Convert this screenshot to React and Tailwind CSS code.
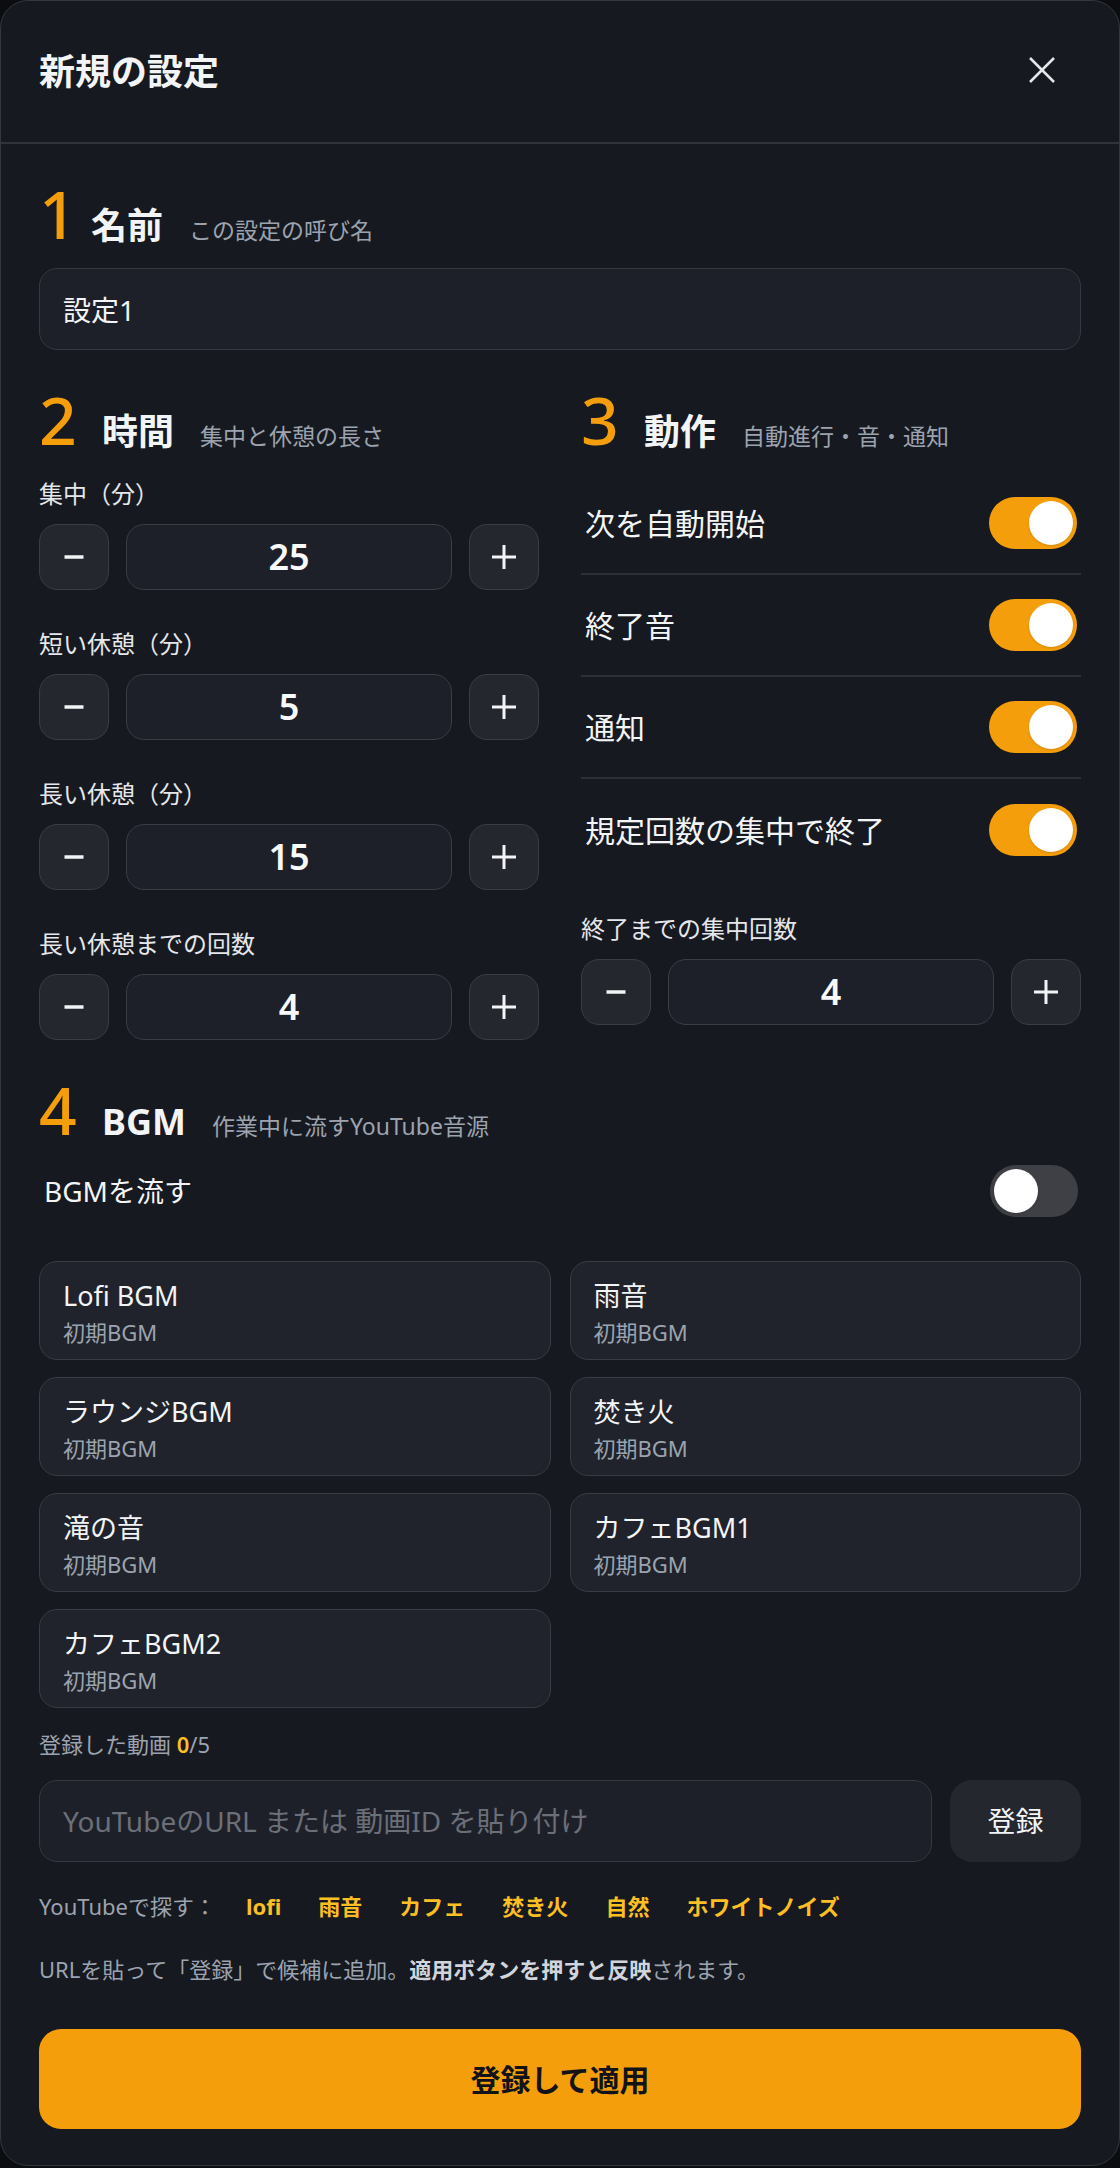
import React, { useState } from 'react';

const BGMS = [
  { name: 'Lofi BGM' },
  { name: '雨音' },
  { name: 'ラウンジBGM' },
  { name: '焚き火' },
  { name: '滝の音' },
  { name: 'カフェBGM1' },
  { name: 'カフェBGM2' },
];

const SEARCH_WORDS = ['lofi', '雨音', 'カフェ', '焚き火', '自然', 'ホワイトノイズ'];

function SectionHead({ num, title, sub }) {
  // "1" is narrower than the other digits in the original font
  const numWidth = num === '1' ? 'w-[52px]' : 'w-[63px]';
  return (
    <div className="flex items-baseline">
      <span className={'text-[66px] leading-none font-medium text-[#f59e0b] shrink-0 ' + numWidth}>{num}</span>
      <span className="text-[36px] leading-none font-bold text-[#f3f4f6]">{title}</span>
      <span className="text-[23px] leading-none text-[#9ca3af] ml-[26px]">{sub}</span>
    </div>
  );
}

function Toggle({ on, onChange }) {
  return (
    <button
      onClick={() => onChange(!on)}
      className={
        'w-[88px] h-[52px] rounded-full p-[4px] flex items-center shrink-0 ' +
        (on ? 'bg-[#f59e0b] justify-end' : 'bg-[#3f4046] justify-start')
      }
    >
      <span className="block w-[44px] h-[44px] rounded-full bg-white shadow" />
    </button>
  );
}

function Stepper({ label, value, onChange }) {
  return (
    <div>
      <div className="text-[24px] leading-[32px] text-[#e5e7eb]">{label}</div>
      <div className="mt-[14px] flex gap-[17px]">
        <button
          onClick={() => onChange(Math.max(1, value - 1))}
          className="w-[70px] h-[66px] shrink-0 rounded-[18px] border border-[#3a3d44] bg-[#25272e] flex items-center justify-center"
        >
          <svg width="24" height="24" viewBox="0 0 24 24">
            <line x1="2.5" y1="12" x2="21.5" y2="12" stroke="#f3f4f6" strokeWidth="3.5" />
          </svg>
        </button>
        <div className="flex-1 h-[66px] rounded-[18px] border border-[#3a3d44] bg-[#1e2029] flex items-center justify-center text-[36px] font-semibold text-[#f9fafb]">
          {value}
        </div>
        <button
          onClick={() => onChange(value + 1)}
          className="w-[70px] h-[66px] shrink-0 rounded-[18px] border border-[#3a3d44] bg-[#25272e] flex items-center justify-center"
        >
          <svg width="24" height="24" viewBox="0 0 24 24">
            <line x1="0" y1="12" x2="24" y2="12" stroke="#f3f4f6" strokeWidth="3" />
            <line x1="12" y1="0" x2="12" y2="24" stroke="#f3f4f6" strokeWidth="3" />
          </svg>
        </button>
      </div>
    </div>
  );
}

export default function App() {
  const [name, setName] = useState('設定1');
  const [focus, setFocus] = useState(25);
  const [shortBreak, setShortBreak] = useState(5);
  const [longBreak, setLongBreak] = useState(15);
  const [rounds, setRounds] = useState(4);
  const [endCount, setEndCount] = useState(4);
  const [autoStart, setAutoStart] = useState(true);
  const [sound, setSound] = useState(true);
  const [notify, setNotify] = useState(true);
  const [limit, setLimit] = useState(true);
  const [bgm, setBgm] = useState(false);
  const [url, setUrl] = useState('');

  const actions = [
    { label: '次を自動開始', on: autoStart, set: setAutoStart },
    { label: '終了音', on: sound, set: setSound },
    { label: '通知', on: notify, set: setNotify },
    { label: '規定回数の集中で終了', on: limit, set: setLimit },
  ];

  return (
    <div className="min-h-screen bg-[#0c0d10] font-['Noto_Sans','Noto_Sans_CJK_JP',sans-serif]">
      <div className="rounded-[28px] border border-[#34373e] bg-[#161920]">
        {/* header */}
        <div className="h-[143px] border-b-2 border-[#30333a] flex items-center justify-between pl-[38px] pr-[53px]">
          <h1 className="text-[36px] font-bold text-[#f3f4f6]">新規の設定</h1>
          <button className="w-[48px] h-[48px] flex items-center justify-center -mt-[4px]">
            <svg width="26" height="26" viewBox="0 0 26 26">
              <line x1="1" y1="1" x2="25" y2="25" stroke="#e5e7eb" strokeWidth="2.5" />
              <line x1="25" y1="1" x2="1" y2="25" stroke="#e5e7eb" strokeWidth="2.5" />
            </svg>
          </button>
        </div>

        <div className="px-[38px] pt-[36px] pb-[36px]">
          {/* 1 name */}
          <SectionHead num="1" title="名前" sub="この設定の呼び名" />
          <input
            value={name}
            onChange={(e) => setName(e.target.value)}
            className="mt-[22px] w-full h-[82px] rounded-[18px] border border-[#35383f] bg-[#1e2029] px-[23px] text-[28px] text-[#f3f4f6] outline-none"
          />

          {/* 2 / 3 */}
          <div className="mt-[36px] grid grid-cols-2 gap-x-[42px] items-start">
            <div>
              <SectionHead num="2" title="時間" sub="集中と休憩の長さ" />
              <div className="mt-[26px] flex flex-col gap-[38px]">
                <Stepper label="集中（分）" value={focus} onChange={setFocus} />
                <Stepper label="短い休憩（分）" value={shortBreak} onChange={setShortBreak} />
                <Stepper label="長い休憩（分）" value={longBreak} onChange={setLongBreak} />
                <Stepper label="長い休憩までの回数" value={rounds} onChange={setRounds} />
              </div>
            </div>
            <div>
              <SectionHead num="3" title="動作" sub="自動進行・音・通知" />
              <div className="mt-[21px]">
                {actions.map((a, i) => (
                  <div
                    key={a.label}
                    className={
                      'h-[102px] flex items-center justify-between px-[4px] ' +
                      (i < actions.length - 1 ? 'border-b-2 border-[#2c2f36]' : '')
                    }
                  >
                    <span className="text-[30px] text-[#f3f4f6]">{a.label}</span>
                    <Toggle on={a.on} onChange={a.set} />
                  </div>
                ))}
              </div>
              <div className="mt-[32px]">
                <Stepper label="終了までの集中回数" value={endCount} onChange={setEndCount} />
              </div>
            </div>
          </div>

          {/* 4 BGM */}
          <div className="mt-[36px]">
            <SectionHead num="4" title="BGM" sub="作業中に流すYouTube音源" />
            <div className="mt-[23px] h-[52px] flex items-center justify-between pl-[5px] pr-[3px]">
              <span className="text-[28px] text-[#f3f4f6]">BGMを流す</span>
              <Toggle on={bgm} onChange={setBgm} />
            </div>

            <div className="mt-[44px] grid grid-cols-2 gap-x-[19px] gap-y-[17px]">
              {BGMS.map((b) => (
                <button
                  key={b.name}
                  className="text-left rounded-[18px] border border-[#393c44] bg-[#20232b] px-[23px] pt-[16px] pb-[13px]"
                >
                  <div className="text-[27px] leading-[36px] text-[#f3f4f6]">{b.name}</div>
                  <div className="mt-[4px] text-[22px] leading-[28px] text-[#9ca3af]">初期BGM</div>
                </button>
              ))}
            </div>

            <div className="mt-[22px] text-[22px] leading-[28px] text-[#9ca3af]">
              登録した動画 <span className="font-semibold text-[#fbbf24]">0</span>/5
            </div>

            <div className="mt-[22px] flex gap-[18px]">
              <input
                value={url}
                onChange={(e) => setUrl(e.target.value)}
                placeholder="YouTubeのURL または 動画ID を貼り付け"
                className="flex-1 h-[82px] rounded-[18px] border border-[#35383f] bg-[#1e2029] px-[23px] text-[28px] text-[#f3f4f6] placeholder:text-[#6b6f78] outline-none"
              />
              <button className="w-[131px] h-[82px] rounded-[22px] bg-[#25272f] text-[28px] text-[#f3f4f6]">登録</button>
            </div>

            <div className="mt-[30px] flex items-center text-[22px] leading-[28px]">
              <span className="text-[#9ca3af]">YouTubeで探す：</span>
              <div className="ml-[30px] flex gap-[37px]">
                {SEARCH_WORDS.map((w) => (
                  <a key={w} href="#" className="font-bold text-[#fbbf24]">{w}</a>
                ))}
              </div>
            </div>

            <p className="mt-[35px] text-[22px] leading-[28px] text-[#9ca3af]">
              URLを貼って「登録」で候補に追加。<b className="font-bold text-[#d1d5db]">適用ボタンを押すと反映</b>されます。
            </p>

            <button className="mt-[46px] w-full h-[100px] rounded-[22px] bg-[#f59e0b] text-[30px] font-bold text-[#111318]">
              登録して適用
            </button>
          </div>
        </div>
      </div>
    </div>
  );
}
